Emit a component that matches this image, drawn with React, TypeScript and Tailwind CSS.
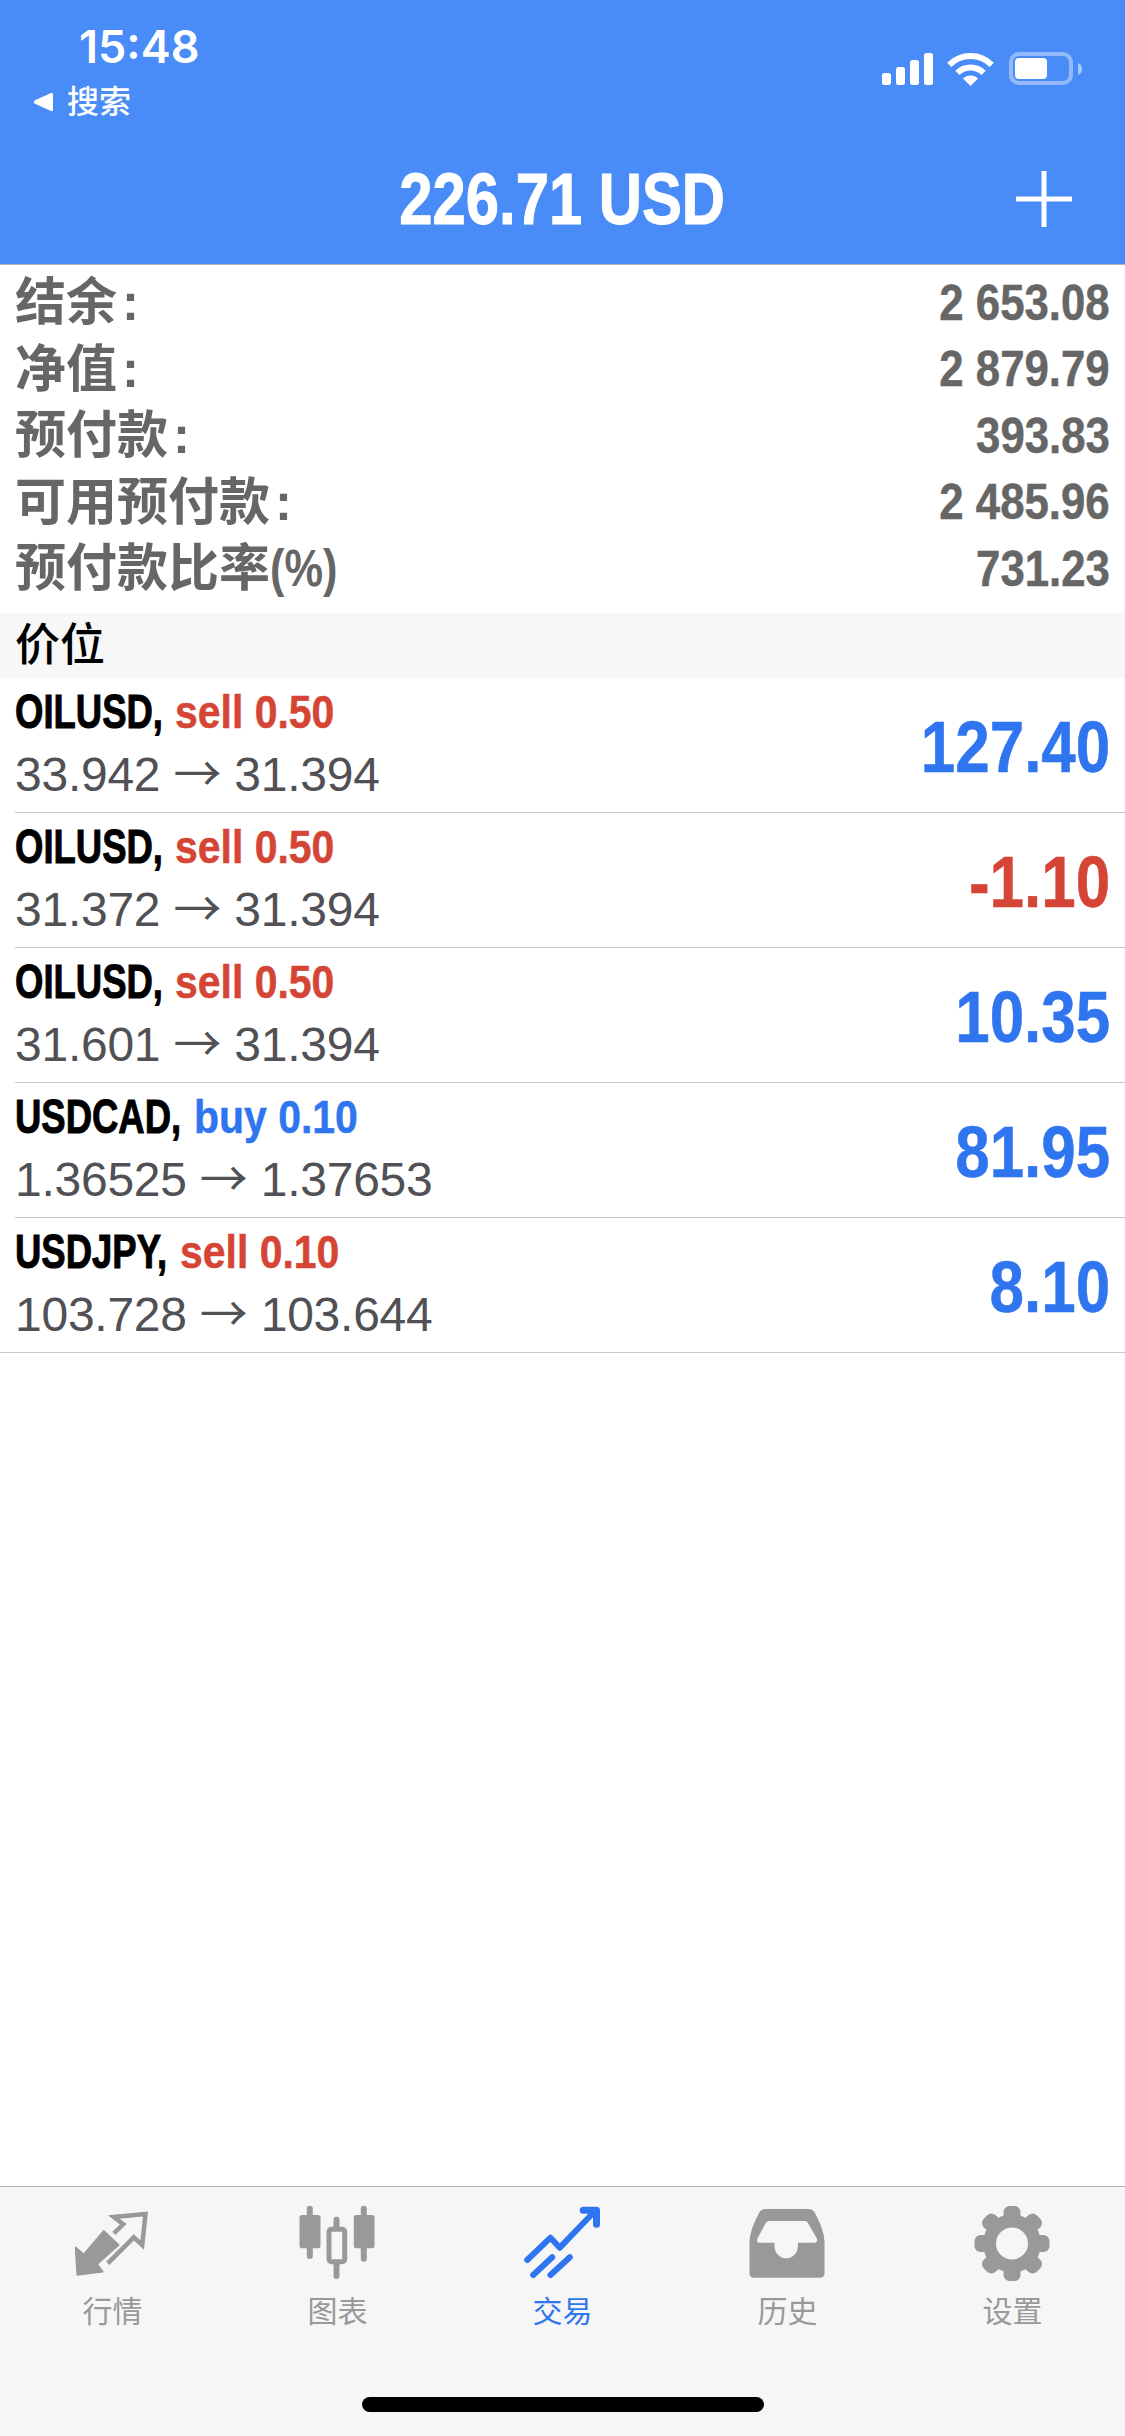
const rows = [
  { sym: "OILUSD,", symW: "w-[160px]", side: "sell 0.50", sell: true, from: "33.942", to: "31.394", pnl: "127.40", up: true },
  { sym: "OILUSD,", symW: "w-[160px]", side: "sell 0.50", sell: true, from: "31.372", to: "31.394", pnl: "-1.10", up: false },
  { sym: "OILUSD,", symW: "w-[160px]", side: "sell 0.50", sell: true, from: "31.601", to: "31.394", pnl: "10.35", up: true },
  { sym: "USDCAD,", symW: "w-[179px]", side: "buy 0.10", sell: false, from: "1.36525", to: "1.37653", pnl: "81.95", up: true },
  { sym: "USDJPY,", symW: "w-[165px]", side: "sell 0.10", sell: true, from: "103.728", to: "103.644", pnl: "8.10", up: true },
];

const summary = [
  { label: "结余", colon: true, value: "2 653.08" },
  { label: "净值", colon: true, value: "2 879.79" },
  { label: "预付款", colon: true, value: "393.83" },
  { label: "可用预付款", colon: true, value: "2 485.96" },
  { label: "预付款比率", colon: false, value: "731.23" },
];

function StatusIcons() {
  return (
    <svg width="205" height="38" viewBox="0 0 205 38" fill="white">
      <rect x="2" y="23" width="9" height="12" rx="2.5" />
      <rect x="16" y="17" width="9" height="18" rx="2.5" />
      <rect x="30" y="10" width="9" height="25" rx="2.5" />
      <rect x="44" y="3" width="9" height="32" rx="2.5" />
      <path d="M69.3 14.8A30 30 0 0 1 111.7 14.8" fill="none" stroke="white" strokeWidth="6" />
      <path d="M77.4 22.9A18.5 18.5 0 0 1 103.6 22.9" fill="none" stroke="white" strokeWidth="6" />
      <path d="M90.5 36L83 28.5A10.6 10.6 0 0 1 98 28.5Z" />
      <rect x="131" y="4" width="60" height="29" rx="8" fill="none" stroke="white" strokeOpacity="0.4" strokeWidth="4" />
      <rect x="135" y="8" width="32" height="21" rx="4" />
      <path d="M198 13C201 14 202 16 202 19C202 22 201 24 198 25Z" fill="white" fillOpacity="0.5" />
    </svg>
  );
}

function QuotesIcon() {
  return (
    <svg width="80" height="80" viewBox="0 0 80 80" fill="#999999">
      <path
        d="M2.5 43.3L10.8 50.3L30.8 26.7L45.8 41L24.2 60.3L29.8 67.7L4.2 71Z"
        stroke="#999999"
        strokeWidth="1.5"
        strokeLinejoin="round"
      />
      <path
        d="M40.8 29.3L50.2 20.3L40.8 13L72.5 10L69.2 41L60.8 33.3L34.8 59.3"
        fill="none"
        stroke="#999999"
        strokeWidth="4.5"
      />
    </svg>
  );
}

function ChartIcon() {
  return (
    <svg width="80" height="80" viewBox="0 0 80 80" fill="#999999">
      <rect x="8.8" y="1.7" width="6" height="53.3" rx="3" />
      <rect x="1.5" y="11" width="21" height="33.3" rx="2.5" />
      <rect x="35.5" y="12.7" width="6" height="62.3" rx="3" />
      <rect x="31" y="25.2" width="15.7" height="32.6" rx="2.5" fill="#f6f6f6" stroke="#999999" strokeWidth="5" />
      <rect x="62.8" y="1.7" width="6" height="56" rx="3" />
      <rect x="55.8" y="11" width="20.7" height="33.3" rx="2.5" />
    </svg>
  );
}

function TradeIcon() {
  return (
    <svg width="80" height="80" viewBox="0 0 80 80" fill="none" stroke="#2f75f0" strokeWidth="6" strokeLinecap="round" strokeLinejoin="round">
      <path d="M4.2 56L27.5 33.7L36.8 43.7L71 8" />
      <path d="M60.2 6.3H73.5V20.3" strokeWidth="7" />
      <path d="M10.2 71L29.2 53.3" />
      <path d="M27.5 71L46.8 53.3" />
    </svg>
  );
}

function HistoryIcon() {
  return (
    <svg width="80" height="80" viewBox="0 0 80 80" fill="#999999">
      <path
        fillRule="evenodd"
        d="M17 5H60Q65 5 67 9Q76.5 27 76.5 38V69Q76.5 73.7 72 73.7H6Q1.5 73.7 1.5 69V38Q1.5 27 11 9Q13 5 17 5ZM21 17Q18.8 17 17.8 19L9.5 34.5Q8 38.7 11.5 38.7H26.5V42A11.7 12.3 0 0 0 49.9 42V38.7H66.5Q70 38.7 68.8 34.5L60 19Q59 17 57 17Z"
      />
    </svg>
  );
}

function SettingsIcon() {
  return (
    <svg width="80" height="80" viewBox="0 0 80 80" fill="#999999">
      <circle cx="39" cy="39.5" r="22.5" fill="none" stroke="#999999" strokeWidth="13" />
      {[0, 45, 90, 135, 180, 225, 270, 315].map((a) => (
        <rect key={a} x="30.5" y="2" width="17" height="16" rx="6" transform={`rotate(${a} 39 39.5)`} />
      ))}
    </svg>
  );
}

const tabs = [
  { label: "行情", icon: <QuotesIcon />, active: false },
  { label: "图表", icon: <ChartIcon />, active: false },
  { label: "交易", icon: <TradeIcon />, active: true },
  { label: "历史", icon: <HistoryIcon />, active: false },
  { label: "设置", icon: <SettingsIcon />, active: false },
];

export default function App() {
  return (
    <div className="w-[1125px] h-[2436px] flex flex-col bg-white font-['Liberation_Sans','Noto_Sans_CJK_SC',sans-serif]">
      <header className="h-[265px] bg-[#4a8cf7] border-b border-[#b5b5b5] text-white">
        <div className="h-[164px] flex justify-between">
          <div className="pl-[33px] pt-[25px]">
            <div className="pl-[46px] text-[45px] leading-[44px] font-semibold font-['Inter',sans-serif]">15:48</div>
            <div className="mt-[11px] flex items-center gap-[14px]">
              <svg width="20" height="20" viewBox="0 0 20 20" fill="white">
                <path d="M18 1Q20 0 20 3V17Q20 20 18 19L1.5 11.5Q0 10 1.5 8.5Z" />
              </svg>
              <span className="text-[32px] leading-[44px] font-medium">搜索</span>
            </div>
          </div>
          <div className="pt-[50px] pr-[40px]">
            <StatusIcons />
          </div>
        </div>
        <div className="grid grid-cols-[1fr_auto_1fr] items-center">
          <div />
          <div className="text-[72px] leading-[70px] font-bold origin-center scale-x-[0.83] whitespace-nowrap [-webkit-text-stroke:1px_white]">226.71 USD</div>
          <div className="justify-self-end pr-[53px]">
            <svg width="56" height="56" viewBox="0 0 56 56" fill="white">
              <rect x="25.5" y="0" width="5" height="56" />
              <rect x="0" y="25.5" width="56" height="5" />
            </svg>
          </div>
        </div>
      </header>

      <section className="h-[348px] pl-[15px] pr-[15px] pt-[5px] text-[#666666] text-[51px] font-bold">
        {summary.map((s) => (
          <div key={s.label} className="h-[66.5px] flex items-center justify-between">
            <div className="flex items-center">
              <span>{s.label}</span>
              {s.colon ? (
                <span className="ml-[5px]">:</span>
              ) : (
                <span className="inline-block origin-left scale-x-[0.85]">(%)</span>
              )}
            </div>
            <span className="inline-block origin-right scale-x-[0.875] text-[50px] whitespace-nowrap [-webkit-text-stroke:0.5px_#666666]">{s.value}</span>
          </div>
        ))}
      </section>

      <div className="h-[65px] pl-[15px] flex items-center bg-[#f7f7f7] text-[45px] font-medium text-black">价位</div>

      <div>
        {rows.map((r, i) => {
          const last = i === rows.length - 1;
          return (
            <div key={i} className={last ? "pl-[15px] border-b border-[#c8c8c8]" : "pl-[15px]"}>
              <div className={last ? "h-[134px] flex justify-between pr-[15px]" : "h-[135px] flex justify-between pr-[15px] border-b border-[#c8c8c8]"}>
                <div className="pt-[4px]">
                  <div className="flex items-center h-[60px] whitespace-nowrap">
                    <span className={`${r.symW} shrink-0`}>
                      <span className="inline-block origin-left scale-x-[0.76] text-[48px] leading-[60px] font-bold text-black [-webkit-text-stroke:1px_black]">
                        {r.sym}
                      </span>
                    </span>
                    <span className={r.sell ? "inline-block origin-left scale-x-[0.89] text-[46px] leading-[60px] font-bold text-[#d54535] [-webkit-text-stroke:0.5px_#d54535]" : "inline-block origin-left scale-x-[0.89] text-[46px] leading-[60px] font-bold text-[#2f75f0] [-webkit-text-stroke:0.5px_#2f75f0]"}>
                      {r.side}
                    </span>
                  </div>
                  <div className="mt-[3px] text-[48px] leading-[60px] tracking-[-0.25px] text-[#505055] whitespace-nowrap">
                    {r.from} <span className="leading-[0] font-['Noto_Sans_CJK_SC',sans-serif]">→</span> {r.to}
                  </div>
                </div>
                <div className={r.up ? "self-center pt-[3px] text-[72px] leading-[70px] font-bold text-[#2f75f0] origin-right scale-x-[0.86] [-webkit-text-stroke:0.5px_#2f75f0]" : "self-center pt-[3px] text-[72px] leading-[70px] font-bold text-[#d54535] origin-right scale-x-[0.86] [-webkit-text-stroke:0.5px_#d54535]"}>
                  {r.pnl}
                </div>
              </div>
            </div>
          );
        })}
      </div>

      <div className="flex-1" />

      <nav className="h-[250px] flex flex-col bg-[#f6f6f6] border-t border-[#b5b5b5]">
        <div className="grid grid-cols-5 pt-[17px]">
          {tabs.map((t) => (
            <div key={t.label} className="flex flex-col items-center">
              {t.icon}
              <span className={t.active ? "mt-[8px] text-[30px] leading-[40px] text-[#2f75f0]" : "mt-[8px] text-[30px] leading-[40px] text-[#999999]"}>
                {t.label}
              </span>
            </div>
          ))}
        </div>
        <div className="mt-auto mb-[24px] mx-auto w-[402px] h-[15px] rounded-full bg-black" />
      </nav>
    </div>
  );
}
